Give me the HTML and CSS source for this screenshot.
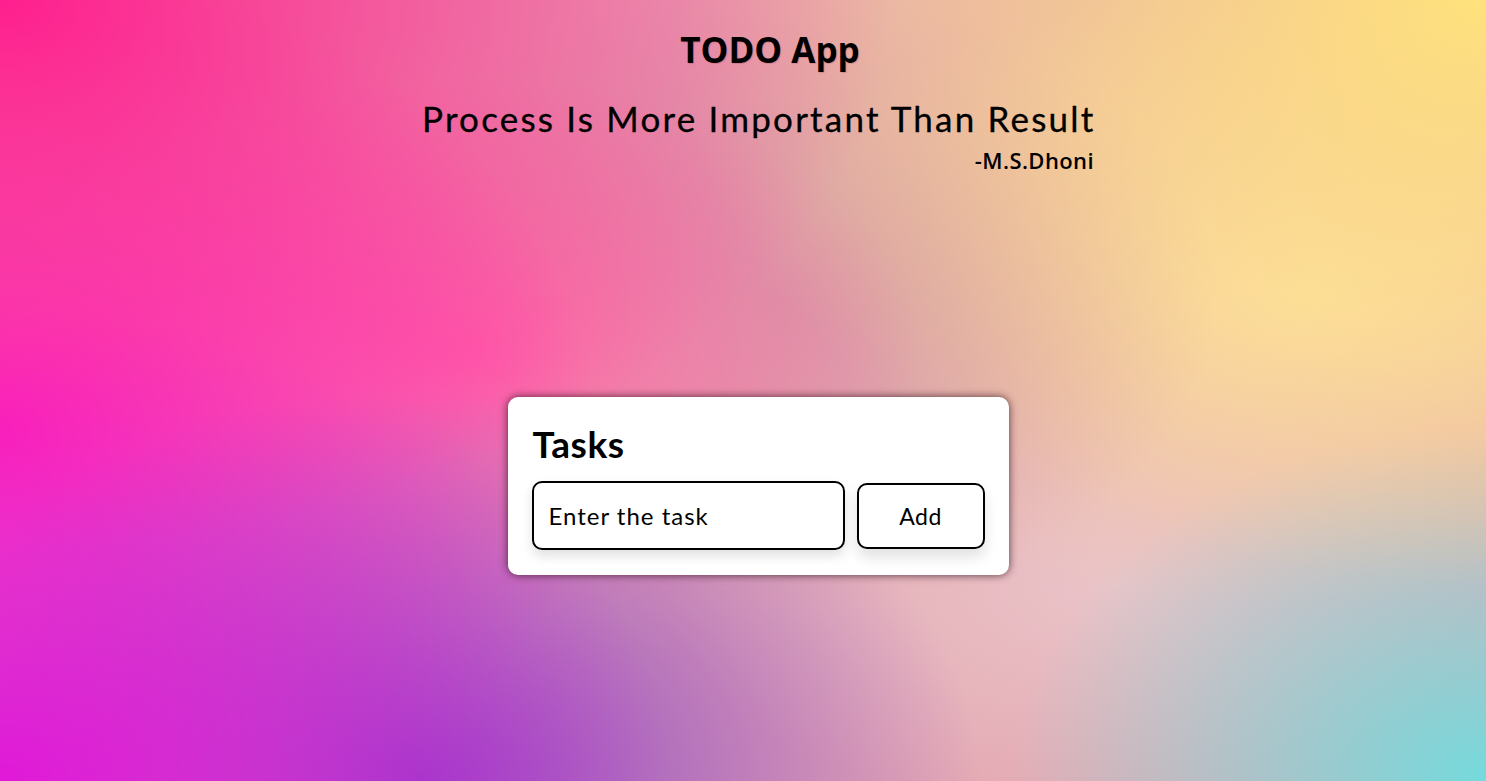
FILE: index.html
```html
<!DOCTYPE html>
<html lang="en">
<head>
<meta charset="utf-8">
<title>TODO App</title>
<link rel="stylesheet" href="styles.css">
</head>
<body>
<div class="page">
  <header class="header">
    <h1 class="title">TODO App</h1>
    <div class="quote">
      <p class="quote-text">Process Is More Important Than Result</p>
      <p class="quote-author">-M.S.Dhoni</p>
    </div>
  </header>
  <main class="main">
    <section class="card">
      <h2 class="card-title">Tasks</h2>
      <div class="row">
        <input class="task-input" type="text" value="Enter the task">
        <button class="add-btn" type="button">Add</button>
      </div>
    </section>
  </main>
</div>
</body>
</html>
```

FILE: styles.css
```css
* { box-sizing: border-box; }
html, body { margin: 0; padding: 0; height: 100%; }
body {
  font-family: "Lato", "Noto Sans", sans-serif;
  color: #000;
  background-color: #e4a8b2;
  background-image:
    radial-gradient(ellipse 60% 70% at 0% 0%, #ff1f8e 0%, rgba(255,31,142,0) 100%),
    radial-gradient(ellipse 55% 75% at 100% 0%, #ffe27c 0%, rgba(255,226,124,0) 100%),
    radial-gradient(ellipse 45% 60% at 0% 100%, #e018d8 0%, rgba(224,24,216,0) 100%),
    radial-gradient(ellipse 38% 50% at 28% 100%, #8c44c6 0%, rgba(140,68,198,0) 100%),
    radial-gradient(ellipse 32% 45% at 100% 100%, #74dadc 0%, rgba(116,218,220,0) 100%),
    radial-gradient(ellipse 40% 60% at 0% 55%, #ff22c4 0%, rgba(255,34,196,0) 100%),
    radial-gradient(ellipse 30% 35% at 32% 45%, #ff6aa8 0%, rgba(255,106,168,0) 100%),
    radial-gradient(ellipse 30% 40% at 52% 38%, #d49aa6 0%, rgba(212,154,166,0) 100%),
    radial-gradient(ellipse 40% 40% at 88% 38%, #fbdcaa 0%, rgba(251,220,170,0) 100%),
    radial-gradient(ellipse 30% 30% at 75% 75%, #eac4c8 0%, rgba(234,196,200,0) 100%);
}
.page {
  width: 100%;
  height: 100%;
  display: flex;
  flex-direction: column;
  align-items: center;
  padding-left: 30px;
}
.header {
  width: 672px;
  padding-top: 27px;
}
.title {
  margin: 0;
  text-align: center;
  font-family: "Open Sans", sans-serif;
  font-weight: 700;
  font-size: 35px;
  line-height: 46px;
  padding-left: 24px;
  text-shadow: 1px 1px 1px rgba(120,0,30,0.18);
}
.quote { margin-top: 24px; }
.quote-text {
  margin: 0;
  font-size: 35px;
  font-weight: 400;
  line-height: 42px;
  text-align: right;
  letter-spacing: 2.2px;
  white-space: nowrap;
  -webkit-text-stroke: 0.3px #000;
}
.quote-author {
  margin: 6px 0 0;
  font-family: "Open Sans", sans-serif;
  font-weight: 600;
  font-size: 22px;
  line-height: 30px;
  text-align: right;
  letter-spacing: 0.4px;
}
.main {
  margin-top: 222px;
}
.card {
  width: 501px;
  height: 178px;
  background: #fff;
  border-radius: 10px;
  box-shadow: 0 0 9px rgba(40,10,20,0.75);
  padding: 25px 24px 24px 24px;
}
.card-title {
  margin: 0 0 15px 1px;
  font-size: 37px;
  font-weight: 700;
  line-height: 44px;
  letter-spacing: 0.6px;
}
.row {
  display: flex;
  align-items: center;
  gap: 12px;
}
.task-input {
  width: 313px;
  height: 69px;
  border: 2px solid #000;
  border-radius: 10px;
  padding: 0 15px;
  font-family: "Lato", sans-serif;
  font-size: 24px;
  letter-spacing: 1px;
  color: #000;
  background: #fff;
  box-shadow: 0 6px 12px rgba(0,0,0,0.12);
  outline: none;
}
.add-btn {
  width: 128px;
  height: 66px;
  border: 2px solid #000;
  border-radius: 10px;
  background: #fff;
  font-family: "Lato", sans-serif;
  font-size: 23px;
  letter-spacing: 0.5px;
  color: #000;
  box-shadow: 0 8px 14px rgba(0,0,0,0.12);
  cursor: pointer;
}
```
